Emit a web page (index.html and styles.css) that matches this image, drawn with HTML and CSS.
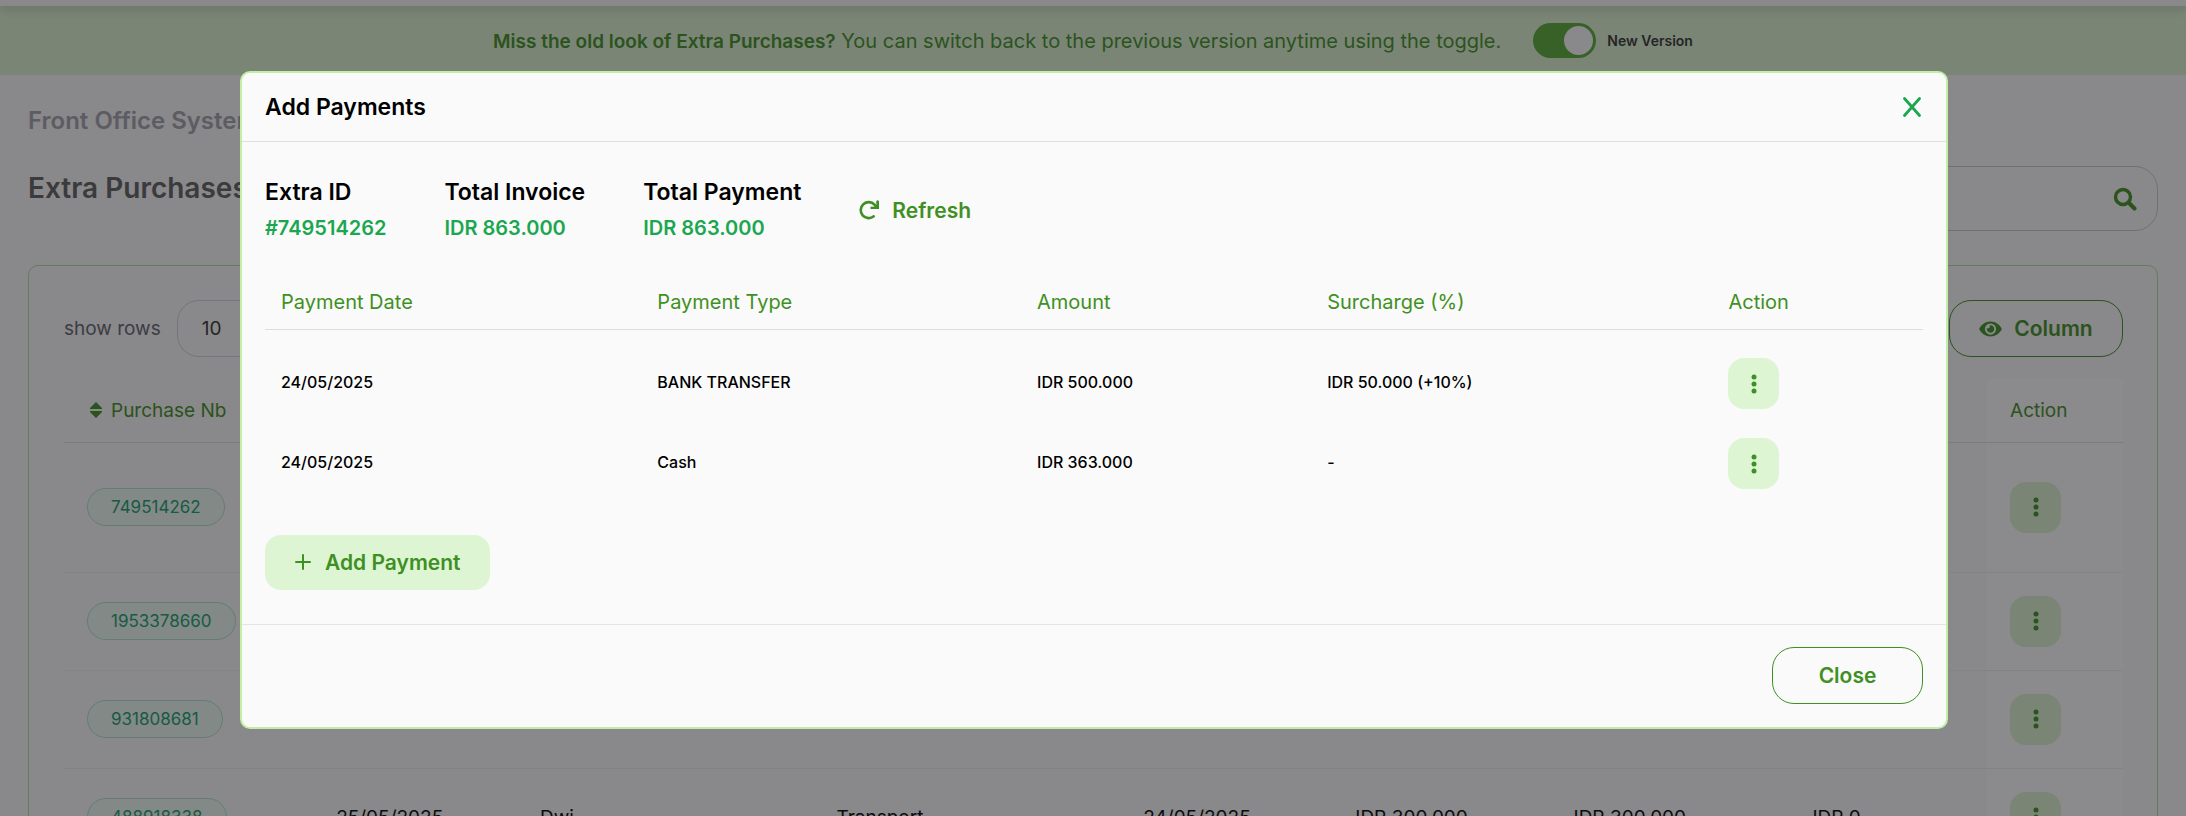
FILE: index.html
```html
<!DOCTYPE html>
<html lang="en">
<head>
  <meta charset="UTF-8">
  <title>Extra Purchases</title>
  <meta name="viewport" content="width=device-width, initial-scale=1.0">
  <link rel="stylesheet" href="styles.css">
</head>
<body>

<!-- icons used more than once -->
<svg class="sprite" aria-hidden="true">
  <symbol id="dots" viewBox="0 0 6 20">
    <circle cx="3" cy="3" r="2.5"/>
    <circle cx="3" cy="10" r="2.5"/>
    <circle cx="3" cy="17" r="2.5"/>
  </symbol>
</svg>

<div class="topbar"></div>

<div class="banner">
  <p class="banner-text"><strong>Miss the old look of Extra Purchases?</strong> You can switch back to the previous version anytime using the toggle.</p>
  <label class="switch">
    <input type="checkbox" checked>
    <span>New Version</span>
  </label>
</div>

<main class="page">
  <p class="breadcrumb">Front Office System</p>
  <div class="page-head">
    <h1>Extra Purchases</h1>
    <div class="search">
      <input type="text" aria-label="Search">
      <button type="button" aria-label="Search">
        <svg viewBox="0 0 24 24" width="24" height="24"><circle cx="10" cy="10" r="7.5" fill="none" stroke="currentColor" stroke-width="3.4"/><path d="M15.5 15.5 21.5 21.5" stroke="currentColor" stroke-width="4" stroke-linecap="round"/></svg>
      </button>
    </div>
  </div>

  <section class="card">
    <div class="card-tools">
      <label for="rows">show rows</label>
      <select id="rows">
        <option>10</option>
      </select>
      <button type="button" class="btn btn-outline btn-column">
        <svg viewBox="0 0 576 512" width="23" height="20"><path fill="currentColor" d="M572.5 241.400C518.300 135.600 410.900 64 288 64S57.700 135.600 3.500 241.400a32.400 32.400 0 0 0 0 29.200C57.700 376.400 165.100 448 288 448s230.300-71.600 284.500-177.400a32.400 32.400 0 0 0 0-29.200zM288 400a144 144 0 1 1 144-144 143.900 143.900 0 0 1-144 144zm0-240a95.300 95.300 0 0 0-25.300 3.800 47.900 47.900 0 0 1-66.900 66.900A95.800 95.800 0 1 0 288 160z"/></svg>
        Column
      </button>
    </div>

    <table class="purchases">
      <colgroup>
        <col class="p-nb"><col class="p-date"><col class="p-guest"><col class="p-item"><col class="p-created"><col class="p-total"><col class="p-paid"><col class="p-due"><col class="p-action">
      </colgroup>
      <thead>
        <tr>
          <th>
            <span class="sort">
              <svg viewBox="0 0 12 16" width="12" height="16"><path fill="currentColor" d="M6 0 12 6V7H0V6zM0 9H12V10L6 16 0 10z"/></svg>
              Purchase Nb
            </span>
          </th>
          <td></td><td></td><td></td><td></td><td></td><td></td><td></td>
          <th>Action</th>
        </tr>
      </thead>
      <tbody>
        <tr class="tall">
          <td><span class="pill">749514262</span></td>
          <td></td><td></td><td></td><td></td><td></td><td></td><td></td>
          <td><button type="button" class="btn-dots" aria-label="Actions"><svg width="6" height="20"><use href="#dots"/></svg></button></td>
        </tr>
        <tr>
          <td><span class="pill">1953378660</span></td>
          <td></td><td></td><td></td><td></td><td></td><td></td><td></td>
          <td><button type="button" class="btn-dots" aria-label="Actions"><svg width="6" height="20"><use href="#dots"/></svg></button></td>
        </tr>
        <tr>
          <td><span class="pill">931808681</span></td>
          <td></td><td></td><td></td><td></td><td></td><td></td><td></td>
          <td><button type="button" class="btn-dots" aria-label="Actions"><svg width="6" height="20"><use href="#dots"/></svg></button></td>
        </tr>
        <tr>
          <td><span class="pill">488918338</span></td>
          <td>25/05/2025</td>
          <td>Dwi</td>
          <td>Transport</td>
          <td>24/05/2025</td>
          <td>IDR 300.000</td>
          <td>IDR 300.000</td>
          <td>IDR 0</td>
          <td><button type="button" class="btn-dots" aria-label="Actions"><svg width="6" height="20"><use href="#dots"/></svg></button></td>
        </tr>
      </tbody>
    </table>
  </section>
</main>

<div class="overlay">
  <div class="modal" role="dialog" aria-labelledby="modalTitle">
    <div class="modal-header">
      <h2 id="modalTitle">Add Payments</h2>
      <button type="button" class="modal-x" aria-label="Close dialog">
        <svg viewBox="0 0 18 20" width="18" height="20"><path d="M1.500 1.500 16.500 18.500M16.500 1.500 1.500 18.500" stroke="currentColor" stroke-width="2.800" stroke-linecap="round"/></svg>
      </button>
    </div>

    <div class="modal-body">
      <div class="summary">
        <dl>
          <dt>Extra ID</dt>
          <dd>#749514262</dd>
        </dl>
        <dl>
          <dt>Total Invoice</dt>
          <dd>IDR 863.000</dd>
        </dl>
        <dl>
          <dt>Total Payment</dt>
          <dd>IDR 863.000</dd>
        </dl>
        <button type="button" class="btn btn-link">
          <svg viewBox="0 0 20 20" width="20" height="20"><path fill="none" stroke="currentColor" stroke-width="2.600" stroke-linecap="round" d="M14.800 16.300A8 8 0 1 1 15.500 4.600L17.500 7"/><path fill="currentColor" d="M20 1V9H11.500V6.800L17.300 6.500V1Q18.600-.6 20 1z"/></svg>
          Refresh
        </button>
      </div>

      <table class="payments">
        <colgroup>
          <col class="c-date"><col class="c-type"><col class="c-amount"><col class="c-surcharge"><col class="c-action">
        </colgroup>
        <thead>
          <tr>
            <th>Payment Date</th>
            <th>Payment Type</th>
            <th>Amount</th>
            <th>Surcharge (%)</th>
            <th>Action</th>
          </tr>
        </thead>
        <tbody>
          <tr>
            <td>24/05/2025</td>
            <td>BANK TRANSFER</td>
            <td>IDR 500.000</td>
            <td>IDR 50.000 (+10%)</td>
            <td><button type="button" class="btn-dots" aria-label="Actions"><svg width="6" height="20"><use href="#dots"/></svg></button></td>
          </tr>
          <tr>
            <td>24/05/2025</td>
            <td>Cash</td>
            <td>IDR 363.000</td>
            <td>-</td>
            <td><button type="button" class="btn-dots" aria-label="Actions"><svg width="6" height="20"><use href="#dots"/></svg></button></td>
          </tr>
        </tbody>
      </table>

      <button type="button" class="btn btn-soft">
        <svg viewBox="0 0 16 16" width="16" height="16"><path d="M8 1V15M1 8H15" stroke="currentColor" stroke-width="2" stroke-linecap="round"/></svg>
        Add Payment
      </button>
    </div>

    <div class="modal-footer">
      <button type="button" class="btn btn-outline btn-close">Close</button>
    </div>
  </div>
</div>

</body>
</html>
```

FILE: styles.css
```css
* {
  box-sizing: border-box;
  font-family: Inter, "Open Sans", sans-serif;
}
html, body {
  height: 100%;
}
body {
  margin: 0;
  background: #fafafa;
  color: #000;
  overflow: hidden;
}
h1, h2, p, dl, dd {
  margin: 0;
}
svg {
  display: block;
  flex: none;
}
.sprite {
  display: none;
}
button {
  padding: 0;
  border: none;
  background: none;
  cursor: pointer;
}

/* top of the page */
.topbar {
  position: relative;
  height: 6px;
  background: #fafafa;
  box-shadow: 0 2px 12px rgba(0,0,0,0.25);
}
.banner {
  display: flex;
  align-items: center;
  justify-content: center;
  gap: 32px;
  height: 69px;
  background: #ddf5d3;
}
.banner-text {
  font-size: 20px;
  color: #3f9023;
}
.banner-text strong {
  font-size: 19px;
  font-weight: 600;
}
.switch {
  display: flex;
  align-items: center;
  gap: 11px;
  font-size: 14px;
  font-weight: 600;
  color: #333;
}
.switch input {
  appearance: none;
  display: flex;
  width: 63px;
  height: 35px;
  margin: 0;
  padding: 3px;
  border-radius: 18px;
  background: #56ad34;
}
.switch input::before {
  content: "";
  width: 29px;
  height: 29px;
  margin-left: auto;
  border-radius: 50%;
  background: #fafafa;
}

/* purchases page */
.page {
  padding: 31px 28px 0;
}
.breadcrumb {
  font-size: 24px;
  line-height: 30px;
  font-weight: 600;
  color: #a3a3ad;
}
.page-head {
  display: flex;
  justify-content: space-between;
  margin-top: 30px;
}
h1 {
  font-size: 28px;
  line-height: 44px;
  font-weight: 600;
  color: #5e5e5e;
}
.search {
  display: flex;
  align-items: center;
  width: 30%;
  height: 65px;
  padding: 0 20px;
  border: 1px solid #c9c9c9;
  border-radius: 23px;
}
.search input {
  flex: 1;
  border: none;
  background: none;
}
.search button {
  color: #3f9023;
}
.card {
  margin-top: 34px;
  padding: 34px 34px 0 35px;
  border: 1px solid #b5dfa2;
  border-radius: 10px;
}
.card-tools {
  display: flex;
  align-items: center;
  font-size: 19px;
  color: #5e6570;
}
.card-tools select {
  appearance: none;
  width: 110px;
  height: 57px;
  margin-left: 16px;
  padding: 0 24px;
  border: 1px solid #d4d4dc;
  border-radius: 22px;
  background: none;
  font-size: 19px;
  color: #333;
}
.btn-column {
  width: 174px;
  margin-left: auto;
}

table {
  width: 100%;
  border-collapse: collapse;
  table-layout: fixed;
}
th {
  font-weight: 400;
  text-align: left;
  color: #3f9023;
}
.purchases {
  margin-top: 22px;
  font-size: 19px;
}
.purchases tr {
  height: 98px;
  border-bottom: 1px solid #eeeeee;
}
.purchases .tall {
  height: 130px;
}
.purchases thead tr {
  height: 63px;
  border-bottom: 1px solid #dedede;
}
.purchases th, .purchases td {
  padding: 0 23px;
  white-space: nowrap;
}
.purchases tr > :last-child {
  background: #fff;
}
.purchases .p-nb { width: 12.1%; }
.purchases .p-date { width: 9.9%; }
.purchases .p-guest { width: 14.4%; }
.purchases .p-item { width: 14.9%; }
.purchases .p-created { width: 10.3%; }
.purchases .p-total { width: 10.6%; }
.purchases .p-paid { width: 11.6%; }
.purchases .p-due { width: 9.6%; }
.purchases .p-action { width: 6.6%; }
.sort {
  display: flex;
  align-items: center;
  gap: 9px;
  padding-left: 3px;
}
.pill {
  display: inline-block;
  padding: 0 23px;
  border: 1px solid #aee5cb;
  border-radius: 19px;
  background: #eefcf5;
  font-size: 17px;
  line-height: 36px;
  color: #15a06c;
}

/* buttons */
.btn {
  display: flex;
  align-items: center;
  justify-content: center;
  font-size: 21px;
  font-weight: 600;
  color: #3f9023;
}
.btn-outline {
  height: 57px;
  gap: 12px;
  border: 1px solid #3f9023;
  border-radius: 22px;
}
.btn-soft {
  height: 55px;
  margin-top: 31px;
  padding: 0 30px;
  gap: 14px;
  border-radius: 16px;
  background: #ddf5d3;
}
.btn-link {
  gap: 13px;
}
.btn-close {
  width: 151px;
}
.btn-dots {
  display: flex;
  align-items: center;
  justify-content: center;
  width: 51px;
  height: 51px;
  border-radius: 16px;
  background: #ddf5d3;
  color: #3f9023;
  fill: currentColor;
}

/* modal */
.overlay {
  position: fixed;
  inset: 0;
  padding: 71px 238px 0 240px;
  background: rgba(23,21,25,0.5);
}
.modal {
  border: 2px solid #c0efa5;
  border-radius: 10px;
  background: #fafafa;
}
.modal-header {
  display: flex;
  align-items: center;
  justify-content: space-between;
  height: 69px;
  padding: 0 25px 0 23px;
  border-bottom: 1px solid #dedede;
}
.modal-header h2 {
  font-size: 23px;
  font-weight: 600;
}
.modal-x {
  color: #1ba750;
}
.modal-body {
  padding: 32px 23px 34px;
}
.summary {
  display: flex;
  align-items: center;
  gap: 58px;
}
dt, dd {
  font-weight: 600;
  line-height: 36px;
}
dt {
  font-size: 23px;
}
dd {
  font-size: 20px;
  color: #1ba750;
}
.payments {
  margin-top: 30px;
  font-size: 16px;
  font-weight: 500;
}
.payments th, .payments td {
  padding: 0 16px;
}
.payments td:not(:last-child) {
  padding-bottom: 4px;
}
.payments thead tr {
  height: 53px;
  border-bottom: 1px solid #dedede;
}
.payments th {
  font-size: 20px;
}
.payments tbody tr {
  height: 80px;
}
.payments tbody::before {
  content: "";
  display: block;
  height: 14px;
}
.payments .c-date { width: 22.7%; }
.payments .c-type { width: 22.9%; }
.payments .c-amount { width: 17.5%; }
.payments .c-surcharge { width: 24.2%; }
.payments .c-action { width: 12.7%; }
.modal-footer {
  display: flex;
  justify-content: flex-end;
  padding: 22px 23px 23px;
  border-top: 1px solid #e3e5e5;
}
```
